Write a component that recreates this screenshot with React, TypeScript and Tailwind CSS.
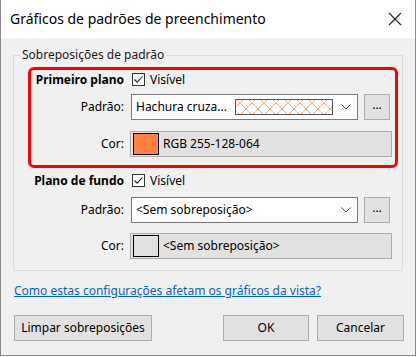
import React from "react";

const font = { fontFamily: '"Noto Sans", "Open Sans", sans-serif' };

function Check() {
  return (
    <div className="w-[13px] h-[13px] bg-white border border-[#333333] flex items-center justify-center">
      <svg width="11" height="11" viewBox="0 0 11 11">
        <path d="M1.5 5.5 L4.2 8.2 L9.5 2.5" fill="none" stroke="#222" strokeWidth="1.1" />
      </svg>
    </div>
  );
}

function Chevron() {
  return (
    <svg width="10" height="6" viewBox="0 0 10 6">
      <path d="M0.5 0.5 L5 5 L9.5 0.5" fill="none" stroke="#444" strokeWidth="1" />
    </svg>
  );
}

function Hatch() {
  return (
    <svg width="98" height="16" viewBox="0 0 98 16" className="block">
      <defs>
        <pattern id="hx" width="12" height="12" patternUnits="userSpaceOnUse" x="-1" y="-2">
          <path d="M0 0 L12 12 M12 0 L0 12" stroke="#ff8040" strokeWidth="1" fill="none" strokeDasharray="1.4 0.6" />
        </pattern>
      </defs>
      <rect x="0" y="0" width="98" height="16" fill="white" />
      <rect x="1" y="1" width="96" height="14" fill="url(#hx)" />
      <rect x="0.5" y="0.5" width="97" height="15" fill="none" stroke="#555" strokeWidth="1" />
    </svg>
  );
}

function DotsButton() {
  return (
    <div className="w-[26px] h-[26px] bg-[#e1e1e1] border border-[#adadad] flex items-center justify-center text-[12px] text-black pb-[4px]">
      ...
    </div>
  );
}

export default function App() {
  return (
    <div className="bg-white w-[417px] h-[357px]" style={font}>
      <div className="w-[416px] h-[356px] border-x border-b border-[#8a8a8a] flex flex-col bg-[#f0f0f0]">
        <div className="h-[38px] bg-white flex items-center justify-between pl-[9px] pr-[13px]">
          <span className="text-[14px] text-black leading-none pb-[1px]">Gráficos de padrões de preenchimento</span>
          <svg width="14" height="14" viewBox="0 0 14 14">
            <path d="M1 1 L13 13 M13 1 L1 13" stroke="#222" strokeWidth="1.1" />
          </svg>
        </div>
        <div className="flex-1 flex flex-col px-[12px] pt-[9px] text-[12px] text-black">
          <fieldset className="relative border border-[#dcdcdc] w-[390px] pb-[11px] px-0">
            <legend className="ml-[6px] px-[2px] leading-[16px] text-[#1a1a1a]">Sobreposições de padrão</legend>
            <div className="absolute left-[14px] top-[4px] w-[370px] h-[101px] border-[3px] border-[#ff0000] rounded-[6px] pointer-events-none" />
            <div className="grid grid-cols-[110px_227px_26px] gap-x-[7px] items-center pt-[9px]">
              <div className="h-[15px] flex items-center justify-end font-bold">Primeiro plano</div>
              <div className="h-[15px] flex items-center gap-[5px] col-span-2 pl-[1px]">
                <Check />
                <span>Visível</span>
              </div>

              <div className="mt-[7px] h-[26px] flex items-center justify-end">Padrão:</div>
              <div className="mt-[7px] h-[26px] bg-white border border-[#7a7a7a] flex items-center pl-[4px] pr-[6px]">
                <span className="w-[99px] whitespace-nowrap">Hachura cruza...</span>
                <Hatch />
                <div className="ml-auto flex items-center"><Chevron /></div>
              </div>
              <div className="mt-[7px] -ml-[1px]"><DotsButton /></div>

              <div className="mt-[11px] h-[26px] flex items-center justify-end">Cor:</div>
              <div className="mt-[11px] h-[26px] col-span-2 -ml-[1px] w-[262px] bg-[#e1e1e1] border border-[#adadad] flex items-center pl-[2px] gap-[4px]">
                <div className="w-[26px] h-[22px] bg-[#ff8040] border border-black" />
                <span>RGB 255-128-064</span>
              </div>

              <div className="mt-[16px] h-[15px] flex items-center justify-end font-bold">Plano de fundo</div>
              <div className="mt-[16px] h-[15px] flex items-center gap-[5px] col-span-2 pl-[1px]">
                <Check />
                <span>Visível</span>
              </div>

              <div className="mt-[9px] h-[26px] flex items-center justify-end">Padrão:</div>
              <div className="mt-[9px] h-[26px] bg-white border border-[#7a7a7a] flex items-center pl-[4px] pr-[6px]">
                <span>&lt;Sem sobreposição&gt;</span>
                <div className="ml-auto flex items-center"><Chevron /></div>
              </div>
              <div className="mt-[9px] -ml-[1px]"><DotsButton /></div>

              <div className="mt-[10px] h-[26px] flex items-center justify-end">Cor:</div>
              <div className="mt-[10px] h-[26px] col-span-2 -ml-[1px] w-[262px] bg-[#e1e1e1] border border-[#adadad] flex items-center pl-[2px] gap-[4px]">
                <div className="w-[26px] h-[22px] bg-[#e1e1e1] border border-black" />
                <span>&lt;Sem sobreposição&gt;</span>
              </div>
            </div>
          </fieldset>
          <a className="mt-[12px] leading-[16px] text-[#0066cc] underline self-start pl-[1px]">Como estas configurações afetam os gráficos da vista?</a>
          <div className="mt-[16px] flex items-center">
            <div className="ml-[1px] w-[138px] h-[26px] bg-[#e1e1e1] border border-[#adadad] flex items-center justify-center">Limpar sobreposições</div>
            <div className="ml-auto w-[86px] h-[26px] bg-[#e1e1e1] border border-[#adadad] flex items-center justify-center">OK</div>
            <div className="ml-[8px] mr-[-1px] w-[87px] h-[26px] bg-[#e1e1e1] border border-[#adadad] flex items-center justify-center">Cancelar</div>
          </div>
        </div>
      </div>
    </div>
  );
}
